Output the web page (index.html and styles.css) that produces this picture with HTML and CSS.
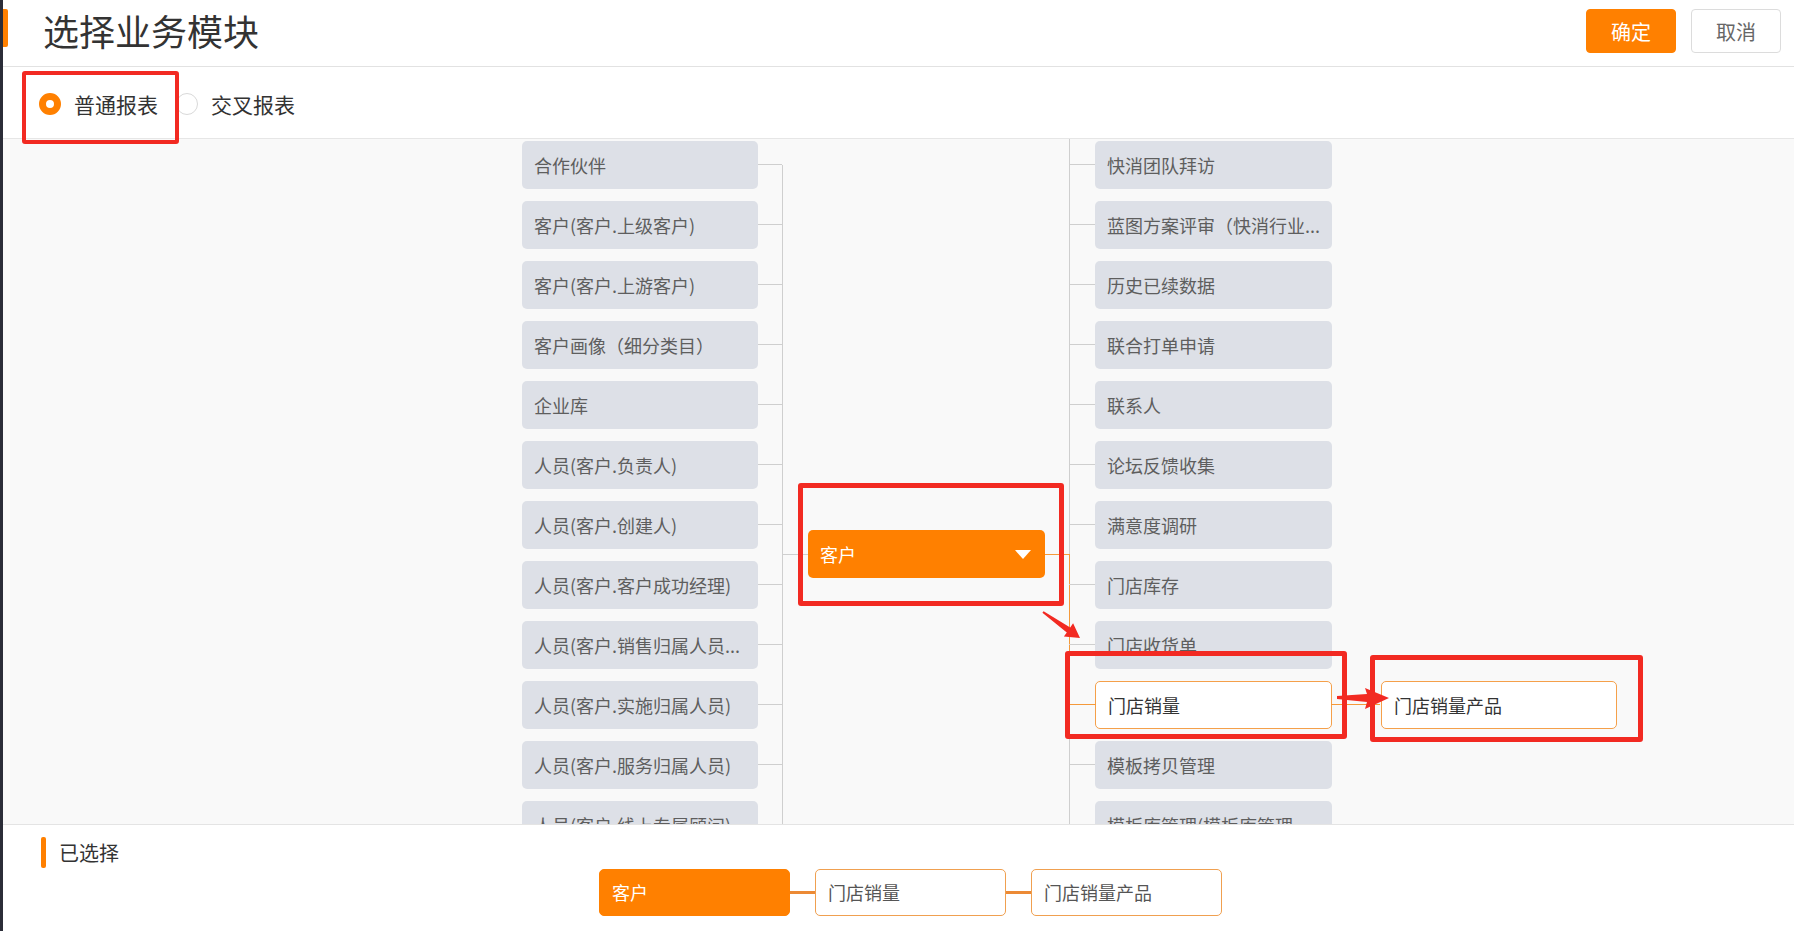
FILE: index.html
```html
<!DOCTYPE html>
<html lang="zh-CN">
<head>
<meta charset="utf-8">
<title>选择业务模块</title>
<link rel="stylesheet" href="styles.css">
</head>
<body>
<div class="page">
  <header class="header">
    <span class="title-bar"></span>
    <h1 class="title">选择业务模块</h1>
    <div class="actions">
      <button class="btn btn-primary">确定</button>
      <button class="btn btn-default">取消</button>
    </div>
  </header>

  <div class="type-row">
    <label class="radio radio-checked"><span class="radio-dot"></span><span class="radio-label">普通报表</span></label>
    <label class="radio"><span class="radio-dot"></span><span class="radio-label">交叉报表</span></label>
  </div>

  <main class="canvas">
    <div class="col col-left">
      <div class="node">合作伙伴</div>
      <div class="node">客户(客户.上级客户)</div>
      <div class="node">客户(客户.上游客户)</div>
      <div class="node">客户画像（细分类目）</div>
      <div class="node">企业库</div>
      <div class="node">人员(客户.负责人)</div>
      <div class="node">人员(客户.创建人)</div>
      <div class="node">人员(客户.客户成功经理)</div>
      <div class="node">人员(客户.销售归属人员...</div>
      <div class="node">人员(客户.实施归属人员)</div>
      <div class="node">人员(客户.服务归属人员)</div>
      <div class="node">人员(客户.线上专属顾问)</div>
    </div>
    <div class="gutter gutter-left"></div>
    <div class="col col-center">
      <div class="node node-root">客户<span class="caret"></span></div>
    </div>
    <div class="gutter gutter-right"></div>
    <div class="col col-right">
      <div class="node">快消团队拜访</div>
      <div class="node">蓝图方案评审（快消行业...</div>
      <div class="node">历史已续数据</div>
      <div class="node">联合打单申请</div>
      <div class="node">联系人</div>
      <div class="node">论坛反馈收集</div>
      <div class="node">满意度调研</div>
      <div class="node">门店库存</div>
      <div class="node">门店收货单</div>
      <div class="node node-active">门店销量</div>
      <div class="node">模板拷贝管理</div>
      <div class="node">模板库管理(模板库管理...</div>
    </div>
    <div class="gutter gutter-third"></div>
    <div class="col col-third">
      <div class="node node-active node-leaf">门店销量产品</div>
    </div>
  </main>

  <footer class="selected">
    <div class="selected-head"><span class="selected-bar"></span><span class="selected-title">已选择</span></div>
    <div class="chips">
      <div class="chip chip-root">客户</div>
      <span class="chip-link"></span>
      <div class="chip">门店销量</div>
      <span class="chip-link"></span>
      <div class="chip">门店销量产品</div>
    </div>
  </footer>

  <div class="mark mark-radio"></div>
  <div class="mark mark-root"></div>
  <div class="mark mark-store"></div>
  <div class="mark mark-product"></div>
  <svg class="arrows" width="1794" height="931" viewBox="0 0 1794 931">
    <polygon fill="#f22a22" points="1042.4,612.8 1066.8,632.4 1063.9,636.5 1080,638 1073.1,623.3 1070.2,627.4 1043.6,611.2"/>
    <polygon fill="#f22a22" points="1337,696 1367,694 1365,688 1389,698 1365,709 1367,702 1337,699"/>
  </svg>
</div>
</body>
</html>
```

FILE: styles.css
```css
* { box-sizing: border-box; margin: 0; padding: 0; }
html, body { width: 1794px; height: 931px; overflow: hidden; }
body {
  font-family: "Noto Sans CJK SC", "Microsoft YaHei", "Liberation Sans", sans-serif;
  background: #fff;
  color: #333;
}
.page {
  position: relative;
  height: 931px;
  border-left: 3px solid #2b2d38;
  display: flex;
  flex-direction: column;
}

/* header */
.header {
  flex: none;
  height: 67px;
  border-bottom: 1px solid #e2e2e2;
  display: flex;
  align-items: flex-start;
}
.title-bar {
  width: 5px;
  height: 38px;
  margin-top: 9px;
  background: #ff8000;
  border-radius: 0 2px 2px 0;
}
.title {
  font-size: 36px;
  font-weight: 400;
  line-height: 60px;
  margin-left: 35px;
  color: #333;
}
.actions {
  margin-left: auto;
  display: flex;
  gap: 15px;
  padding-top: 9px;
  padding-right: 13px;
}
.btn {
  width: 90px;
  height: 44px;
  border-radius: 4px;
  font-family: inherit;
  font-size: 20px;
  cursor: pointer;
}
.btn-primary { background: #ff8000; border: 1px solid #ff8000; color: #fff; }
.btn-default { background: #fff; border: 1px solid #dcdcdc; color: #666; }

/* report type */
.type-row {
  flex: none;
  height: 72px;
  border-bottom: 1px solid #e6e6e6;
  display: flex;
  align-items: center;
  padding: 2px 0 0 36px;
}
.radio {
  display: flex;
  align-items: center;
  margin-right: 18px;
  font-size: 21px;
  color: #333;
}
.radio-dot {
  width: 22px;
  height: 22px;
  border-radius: 50%;
  border: 1px solid #d9d9d9;
  background: #fff;
  margin-right: 13px;
}
.radio-checked .radio-dot { border: 7px solid #ff8000; }

/* canvas */
.canvas {
  flex: none;
  height: 685px;
  background: #f9f9f9;
  display: flex;
  align-items: flex-start;
  padding-left: 519px;
  overflow: hidden;
}
.col { flex: none; display: flex; flex-direction: column; gap: 12px; }
.col-left { width: 236px; padding-top: 2px; }
.col-center { width: 237px; padding-top: 391px; }
.col-right { width: 237px; padding-top: 2px; }
.col-third { width: 236px; padding-top: 542px; }

.node {
  position: relative;
  flex: none;
  height: 48px;
  line-height: 48px;
  padding: 0 12px;
  border-radius: 5px;
  background: #dde0e7;
  color: #5e5e5e;
  font-size: 18px;
  white-space: nowrap;
}
.col-left .node::after {
  content: "";
  position: absolute;
  left: 100%;
  top: 23px;
  width: 24px;
  height: 1px;
  background: #cfcfcf;
}
.col-right .node::before {
  content: "";
  position: absolute;
  right: 100%;
  top: 23px;
  width: 26px;
  height: 1px;
  background: #cfcfcf;
}
.node-root {
  background: #ff8000;
  color: #fff;
  display: flex;
  align-items: center;
}
.node-root::before {
  content: "";
  position: absolute;
  right: 100%;
  top: 24px;
  width: 26px;
  height: 1px;
  background: #cfcfcf;
}
.node-root::after {
  content: "";
  position: absolute;
  left: 100%;
  top: 24px;
  width: 24px;
  height: 1px;
  background: #f59a3a;
}
.caret {
  margin-left: auto;
  margin-right: 2px;
  width: 0;
  height: 0;
  border-left: 8px solid transparent;
  border-right: 8px solid transparent;
  border-top: 9px solid #fff;
}
.node-active {
  background: #fff;
  border: 1px solid #f5a04a;
  color: #333;
  line-height: 46px;
}
.col-right .node-active::before { background: #f59a3a; top: 22px; }
.col-right .node-active::after {
  content: "";
  position: absolute;
  left: 100%;
  top: 22px;
  width: 49px;
  height: 1px;
  background: #f59a3a;
}

.gutter { flex: none; position: relative; align-self: stretch; }
.gutter-left { width: 50px; }
.gutter-left::before {
  content: "";
  position: absolute;
  left: 24px;
  top: 26px;
  bottom: 0;
  width: 1px;
  background: #cfcfcf;
}
.gutter-right { width: 50px; }
.gutter-right::before {
  content: "";
  position: absolute;
  left: 24px;
  top: 0;
  bottom: 0;
  width: 1px;
  background: #cfcfcf;
}
.gutter-right::after {
  content: "";
  position: absolute;
  left: 24px;
  top: 415px;
  height: 151px;
  width: 1px;
  background: #f59a3a;
}
.gutter-third { width: 49px; }

/* selected footer */
.selected {
  flex: 1;
  border-top: 1px solid #e4e4e4;
  background: #fff;
  padding: 12px 0 0 38px;
}
.selected-head { display: flex; align-items: center; height: 31px; }
.selected-bar {
  width: 5px;
  height: 31px;
  background: #ff8000;
  border-radius: 2px;
}
.selected-title { margin-left: 13px; font-size: 20px; color: #333; }
.chips {
  display: flex;
  align-items: center;
  margin: 1px 0 0 558px;
}
.chip {
  width: 191px;
  height: 47px;
  line-height: 45px;
  padding-left: 12px;
  border: 1px solid #f0a050;
  border-radius: 5px;
  background: #fff;
  color: #555;
  font-size: 18px;
}
.chip-root { background: #ff8000; border-color: #ff8000; color: #fff; }
.chip-link { width: 25px; height: 3px; background: #ec8a35; }

/* annotations */
.mark {
  position: absolute;
  border: 4px solid #f22a22;
  border-radius: 3px;
  pointer-events: none;
}
.mark-radio { left: 19px; top: 71px; width: 157px; height: 73px; }
.mark-root { left: 795px; top: 483px; width: 266px; height: 123px; border-width: 5px; }
.mark-store { left: 1062px; top: 651px; width: 282px; height: 88px; border-width: 5px; }
.mark-product { left: 1367px; top: 655px; width: 273px; height: 87px; border-width: 5px; }
.arrows { position: absolute; left: -3px; top: 0; pointer-events: none; }
```
